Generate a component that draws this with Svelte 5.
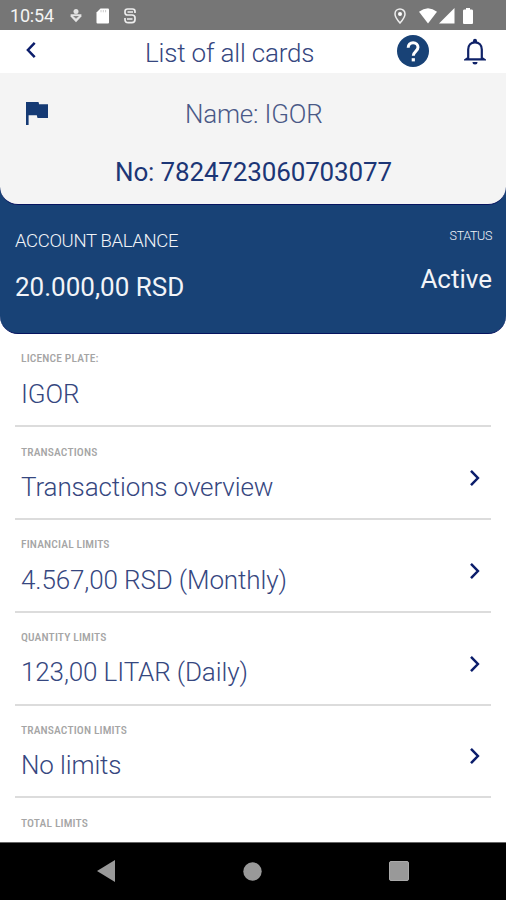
<script>
  const rows = [
    { label: 'LICENCE PLATE:', value: 'IGOR', arrow: false },
    { label: 'TRANSACTIONS', value: 'Transactions overview', arrow: true },
    { label: 'FINANCIAL LIMITS', value: '4.567,00 RSD (Monthly)', arrow: true },
    { label: 'QUANTITY LIMITS', value: '123,00 LITAR (Daily)', arrow: true },
    { label: 'TRANSACTION LIMITS', value: 'No limits', arrow: true },
    { label: 'TOTAL LIMITS', value: '', arrow: false }
  ];
</script>

<div class="screen">
  <div class="statusbar">
    <span class="time">10:54</span>
    <svg class="download" width="12" height="16" viewBox="0 0 12 16" fill="#e4e4e4">
      <circle cx="6" cy="3.600" r="2.500" />
      <path d="M.6 6.200h10.800v2.300L6 14.200.6 8.500z" />
      <path d="M3 8h6l-3 2.800z" fill="#888" />
    </svg>
    <svg class="sd" width="14" height="16" viewBox="0 0 14 16">
      <path d="M4.500 .5H12a1 1 0 0 1 1 1v13a1 1 0 0 1-1 1H1.500a1 1 0 0 1-1-1V4.500z" fill="#fff" />
      <path d="M5 2v2.300M7.300 2v2.300M9.600 2v2.300" stroke="#ccc" stroke-width="1" />
    </svg>
    <svg class="sync" width="12" height="16" viewBox="0 0 12 16" fill="none" stroke="#eee" stroke-width="1.700">
      <path d="M11 5V3.500Q11 1 8.500 1h-5Q1 1 1 3.500v1Q1 7 3.500 7H8q3 0 3 2.700v1.800q0 3.200-3.200 3.200H4.200Q1 14.700 1 11.500V10" />
      <path d="M3.500 4h5.500M3 11h5.500" />
    </svg>
    <div class="signals">
      <svg class="pin" width="12" height="16" viewBox="0 0 12 16">
        <path d="M6 1C3.200 1 1 3.100 1 5.900 1 9.200 6 15 6 15s5-5.800 5-9.100C11 3.100 8.800 1 6 1z" fill="none" stroke="#eee" stroke-width="1.500" />
        <circle cx="6" cy="5.900" r="2" fill="#fff" />
      </svg>
      <svg class="wifi" width="18" height="16" viewBox="0 0 18 16"><path d="M0 3.800Q9-3.200 18 3.800L9 15.500z" fill="#fff" /></svg>
      <svg class="cell" width="16" height="16" viewBox="0 0 16 16"><path d="M15.500 0v15.500H0z" fill="#fff" /></svg>
      <svg class="battery" width="10" height="16" viewBox="0 0 10 16"><path d="M3 0h4v1.500h2q1 .3 1 1.200V15q0 1-1 1H1q-1 0-1-1V2.700q0-.9 1-1.200h2z" fill="#fff" /></svg>
    </div>
  </div>

  <header>
    <svg class="back" width="12" height="18" viewBox="0 0 12 18"><path d="M9.700 1.800 2.900 9l6.800 7.200" fill="none" stroke="#0b1d6b" stroke-width="2.500" /></svg>
    <h1>List of all cards</h1>
    <svg class="help" width="32" height="32" viewBox="0 0 32 32">
      <circle cx="16" cy="16" r="16" fill="#184276" />
      <path d="M11.200 12.700c0-3 2-5 4.900-5s4.900 1.900 4.900 4.600c0 3.900-4.700 4.200-4.700 8.500" fill="none" stroke="#fff" stroke-width="3" />
      <path d="M14.700 23.200h3.200v3.200h-3.200z" fill="#fff" />
    </svg>
    <svg class="bell" width="22" height="27" viewBox="0 0 22 27">
      <path d="M4.200 20V11.500C4.200 7.300 7 4.300 11 4.300s6.800 3 6.800 7.200V20l2 1.400H2.200z" fill="none" stroke="#0f2268" stroke-width="2.200" />
      <path d="M9 4V2.700a2 2 0 0 1 4 0V4zM8.500 24h5a2.500 2.500 0 0 1-5 0z" fill="#0f2268" />
    </svg>
  </header>

  <div class="account">
    <section class="card">
      <div class="nameline">
        <svg class="flag" width="22" height="23" viewBox="0 0 22 23"><path d="M0 0h12.500l.6 2.300H22V16H11.500l-.7-2.700H2.600V23H0z" fill="#153a74" /></svg>
        <span class="name">Name: IGOR</span>
      </div>
      <div class="number">No: 7824723060703077</div>
    </section>
    <section class="balance">
      <div>
        <div class="caption">ACCOUNT BALANCE</div>
        <div class="amount">20.000,00 RSD</div>
      </div>
      <div class="state">
        <div class="statuslabel">STATUS</div>
        <div class="active">Active</div>
      </div>
    </section>
  </div>

  <main>
    {#each rows as row}
      <div class="row">
        <div class="texts">
          <div class="label">{row.label}</div>
          <div class="value">{row.value}</div>
        </div>
        {#if row.arrow}
          <svg class="chevron" width="12" height="18" viewBox="0 0 12 18"><path d="M2 1.800l6.900 7.200L2 16.200" fill="none" stroke="#0b1d6b" stroke-width="2.500" /></svg>
        {/if}
      </div>
    {/each}
  </main>

  <nav>
    <svg width="18" height="22" viewBox="0 0 18 22"><path d="M18 0v22L0 11z" fill="#999" /></svg>
    <svg class="home" width="19" height="19" viewBox="0 0 19 19"><circle cx="9.500" cy="9.500" r="9.200" fill="#999" /></svg>
    <svg width="20" height="20" viewBox="0 0 20 20"><rect x=".5" y=".5" width="19" height="19" rx="1.500" fill="#999" stroke="#aaa" /></svg>
  </nav>
</div>

<style>
  .screen {
    width: 506px;
    height: 900px;
    display: flex;
    flex-direction: column;
    overflow: hidden;
    background: #fff;
    font-family: Roboto, 'Liberation Sans', sans-serif;
    color: #1c3676;
    white-space: nowrap;
  }
  svg { display: block; flex: none; }
  .statusbar {
    height: 30px;
    flex: none;
    box-sizing: border-box;
    display: flex;
    align-items: center;
    padding: 1px 33px 0 10px;
    background: #767676;
    color: #f4f4f4;
  }
  .time { width: 60px; font-size: 18px; line-height: 20px; letter-spacing: -0.200px; }
  .sd { margin-left: 14px; }
  .sync { margin-left: 14px; }
  .signals { display: flex; margin-left: auto; }
  .pin { margin-right: 1px; }
  .wifi { margin-left: 12px; }
  .cell { margin-left: 2px; }
  .battery { margin-left: 8px; }
  header {
    height: 43px;
    flex: none;
    display: flex;
    align-items: center;
    padding: 0 20px 0 25px;
  }
  .back { margin-top: -3px; }
  h1 {
    flex: 1;
    margin: 2px 0 0 108px;
    font-size: 26px;
    line-height: 30px;
    font-weight: 300;
    letter-spacing: -0.180px;
    color: #36477f;
  }
  .help { margin-top: -1px; }
  .bell { margin-left: 35px; }
  .account {
    height: 261px;
    flex: none;
    background: #184276;
    border-radius: 0 0 18px 18px;
    border-bottom: 1px solid #06145f;
    box-sizing: border-box;
  }
  .card {
    height: 132px;
    box-sizing: border-box;
    padding-top: 26px;
    background: #f4f4f4;
    border-bottom: 1px solid #06145f;
    border-radius: 0 0 18px 18px;
  }
  .nameline { display: flex; align-items: center; height: 30px; padding-left: 26px; }
  .flag { margin-top: -2px; }
  .name { margin-left: 137px; font-size: 26px; font-weight: 300; letter-spacing: -0.200px; color: #4a5987; }
  .number { margin: 28px 0 0 115px; font-size: 26px; line-height: 30px; letter-spacing: -0.150px; }
  .balance {
    display: flex;
    justify-content: space-between;
    padding: 0 14px 0 15px;
    color: #f2f4f8;
  }
  .caption { margin-top: 25px; font-size: 18.500px; line-height: 22px; font-weight: 300; letter-spacing: -0.350px; }
  .amount { margin-top: 20px; font-size: 26px; line-height: 30px; }
  .state { text-align: right; }
  .statuslabel { margin-top: 23px; font-size: 12.500px; line-height: 16px; font-weight: 300; letter-spacing: -0.350px; }
  .active { margin-top: 20px; font-size: 26px; line-height: 30px; }
  main { flex: 1; min-height: 0; overflow: hidden; }
  .row {
    height: 92.750px;
    box-sizing: border-box;
    margin: 0 15px;
    padding: 17.250px 10px 0 6px;
    border-bottom: 2px solid #dcdcdc;
    display: flex;
    justify-content: space-between;
  }
  .row:first-child { height: 93.250px; }
  .label {
    font-size: 11.500px;
    line-height: 14px;
    font-weight: 500;
    font-stretch: 75%;
    letter-spacing: 0.150px;
    color: #a5a5a5;
  }
  .value { margin-top: 13.250px; font-size: 26px; line-height: 30px; font-weight: 300; letter-spacing: -0.120px; color: #36477f; }
  .chevron { margin-top: 24.500px; }
  nav {
    height: 58px;
    flex: none;
    box-sizing: border-box;
    display: flex;
    align-items: center;
    justify-content: space-between;
    padding: 0 97px 1px;
    border-top: 1px solid #666;
    background: #000;
  }
  .home { margin-left: 1px; }
</style>
